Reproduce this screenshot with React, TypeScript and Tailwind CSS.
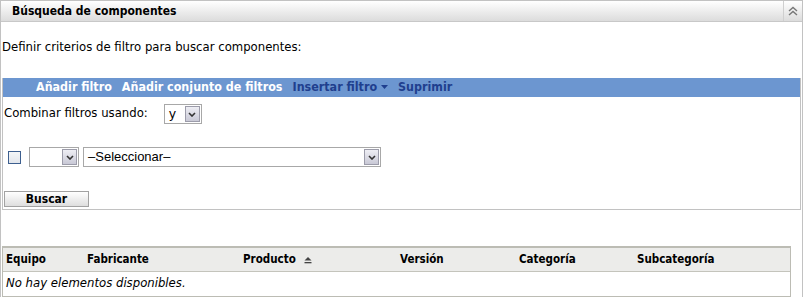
import React from 'react';

const DropBtn: React.FC = () => (
  <span className="flex h-[16px] w-[15px] items-center justify-center border border-[#9c9caa] bg-gradient-to-b from-[#eeeef4] to-[#c9c9d6]">
    <svg width="8" height="5" viewBox="0 0 8 5">
      <path d="M1 1 L4 4 L7 1" fill="none" stroke="#333" strokeWidth="1.6" />
    </svg>
  </span>
);

const Select: React.FC<{ label: string; className: string; textClass?: string }> = ({ label, className, textClass }) => (
  <div className={`flex h-[20px] items-center justify-between border border-[#a8a8a8] bg-white pl-[4px] pr-[1px] ${className}`}>
    <span className={textClass}>{label}</span>
    <DropBtn />
  </div>
);

const columns = [
  { name: 'Equipo', w: 'w-[81px]' },
  { name: 'Fabricante', w: 'w-[156px]' },
  { name: 'Producto', w: 'w-[157px]' },
  { name: 'Versión', w: 'w-[119px]' },
  { name: 'Categoría', w: 'w-[118px]' },
  { name: 'Subcategoría', w: 'w-[150px]' },
];

const bold = "font-['DejaVu_Sans_Condensed','DejaVu_Sans',sans-serif] font-bold";

export default function App() {
  return (
    <div className="h-[297px] w-[805px] overflow-hidden bg-white font-['DejaVu_Sans',sans-serif] text-[11.7px] text-black">
      <div className="h-[298px] w-[803px] border border-[#c2c2c2]">
        <div className="flex h-[21px] items-center border-b border-[#c8c8c8] bg-gradient-to-b from-white to-[#dcdcdc]">
          <span className={`pl-[11px] text-[12px] ${bold}`}>Búsqueda de componentes</span>
          <span className="ml-auto flex h-full w-[19px] items-center justify-center border-l border-[#cfcfcf]">
            <svg width="10" height="10" viewBox="0 0 10 10">
              <path d="M1 5 L5 1.5 L9 5 M1 9 L5 5.5 L9 9" fill="none" stroke="#777" strokeWidth="1.4" />
            </svg>
          </span>
        </div>

        <p className="mt-[18px] pl-[1px] leading-[14px]">Definir criterios de filtro para buscar componentes:</p>

        <div className="ml-[1px] mt-[24px] w-[799px] border border-t-0 border-[#c2c2c2]">
          <div className={`flex h-[19px] items-center gap-[10px] bg-[#6c96d0] pl-[33px] text-[12.4px] ${bold}`}>
            <span className="text-white">Añadir filtro</span>
            <span className="text-white">Añadir conjunto de filtros</span>
            <span className="flex items-center gap-[4px] text-[#1f3f8e]">
              Insertar filtro
              <svg width="7" height="4" viewBox="0 0 7 4">
                <path d="M0 0 H7 L3.5 4 Z" fill="#1f3f8e" />
              </svg>
            </span>
            <span className="text-[#1f3f8e]">Suprimir</span>
          </div>

          <div className="mt-[7px] flex items-center pl-[1px]">
            <span>Combinar filtros usando:</span>
            <Select label="y" className="ml-[16px] w-[38px]" textClass="text-[12.5px]" />
          </div>

          <div className="mt-[23px] flex items-center pl-[5px]">
            <span className="h-[13px] w-[13px] border border-[#3d5f8f] bg-gradient-to-b from-[#f4f6f8] to-[#e2e6ec]" />
            <Select label="" className="ml-[8px] w-[50px]" />
            <Select label="–Seleccionar–" className="ml-[4px] w-[298px]" textClass="font-['Liberation_Sans',sans-serif] text-[13px]" />
          </div>

          <div className="mb-[2px] mt-[24px] pl-[1px]">
            <button className={`flex h-[16px] w-[85px] items-center justify-center border border-[#a2a2a2] bg-gradient-to-b from-white to-[#dedede] text-[12px] ${bold}`}>
              Buscar
            </button>
          </div>
        </div>

        <div className="ml-[1px] mt-[36px] w-[789px] border-x border-b-2 border-t-2 border-[#bcbcb4]">
          <div className={`flex h-[24px] items-center border-b border-[#c4c4bc] bg-[#ececea] text-[11.5px] ${bold}`}>
            {columns.map((c) => (
              <div key={c.name} className={`flex items-center pl-[3px] ${c.w}`}>
                {c.name}
                {c.name === 'Producto' && (
                  <svg className="ml-[8px]" width="8" height="8" viewBox="0 0 8 8">
                    <path d="M0.5 4.5 L4 1 L7.5 4.5 Z" fill="#444" />
                    <rect x="0.5" y="6" width="7" height="1.3" fill="#444" />
                  </svg>
                )}
              </div>
            ))}
          </div>
          <div className="flex h-[24px] items-center pl-[3px] italic">No hay elementos disponibles.</div>
        </div>
      </div>
    </div>
  );
}
